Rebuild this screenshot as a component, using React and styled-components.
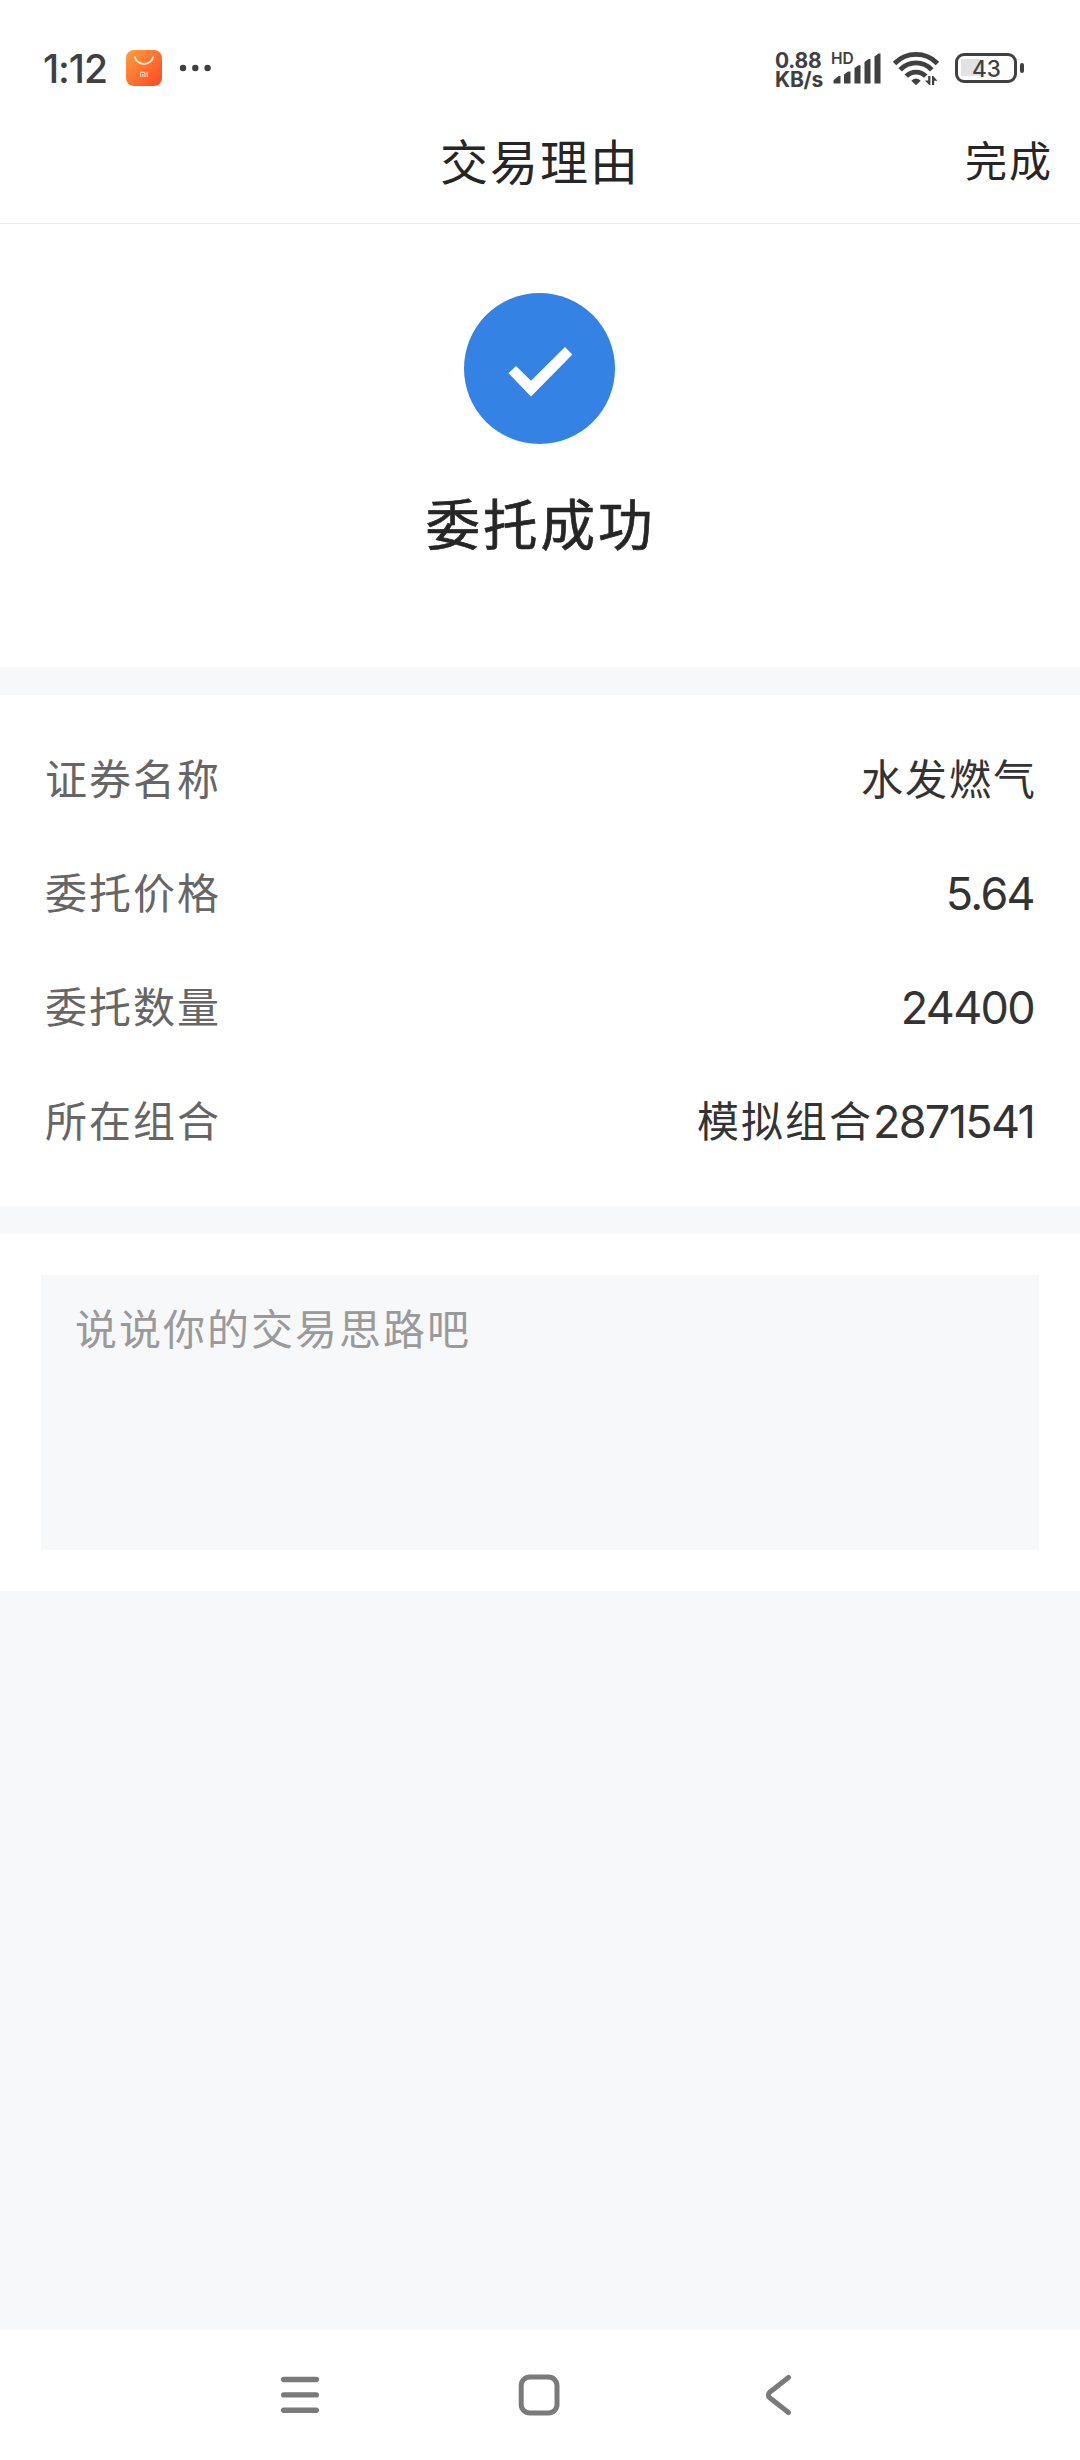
import React, { useState } from "react";
import styled, { createGlobalStyle } from "styled-components";

const orderInfo = [
    { label: "证券名称", text: "水发燃气" },
    { label: "委托价格", number: "5.64" },
    { label: "委托数量", number: "24400" },
    { label: "所在组合", text: "模拟组合", number: "2871541" },
];

const StatusBar = () => {
    return (
        <St.StatusBar>
            <St.StatusLeft>
                <St.Time>1:12</St.Time>
                <svg width="36" height="36" viewBox="0 0 36 36">
                    <defs>
                        <linearGradient id="store" x1="0" y1="0" x2="1" y2="1">
                            <stop offset="0" stopColor="#ff9f3c" />
                            <stop offset="1" stopColor="#ff4726" />
                        </linearGradient>
                    </defs>
                    <rect width="36" height="36" rx="8" fill="url(#store)" />
                    <path d="M8.7 6.5a9.4 8.6 0 0 0 18.6 0" fill="none" stroke="#fff1dc" strokeWidth="1.7" />
                    <path d="M14.6 27v-4.6h3.2q1.2 0 1.2 1.2V27M16.8 24v3M21.2 22v5" fill="none" stroke="#ffd9c0" strokeWidth="1.1" />
                </svg>
                <svg width="32" height="8" viewBox="0 0 32 8" fill="#404040">
                    <circle cx="4" cy="4" r="3.2" />
                    <circle cx="16.3" cy="4" r="3.2" />
                    <circle cx="28.6" cy="4" r="3.2" />
                </svg>
            </St.StatusLeft>
            <St.StatusRight>
                <St.Speed>
                    <span>0.88</span>
                    <span>KB/s</span>
                </St.Speed>
                <St.Signal>
                    <St.Hd>HD</St.Hd>
                    <svg width="50" height="34" viewBox="0 0 50 34" fill="#404040">
                        <path d="M2.5 32.5V29.3L7.5 25H9.5V32.5ZM13 32.5V23.5L17 20.5H19.5V32.5ZM23.5 32.5V17L27.5 14.3H29.5V32.5ZM33.5 32.5V11L37.5 8H39.5V32.5ZM43.5 32.5V5.5L47.5 2.5H49.5V32.5Z" />
                    </svg>
                </St.Signal>
                <St.Wifi width="46" height="36" viewBox="0 0 46 36">
                    <g fill="none" stroke="#404040" strokeWidth="4.8">
                        <path d="M1.5 13.5A30 30 0 0 1 44.5 13.5" />
                        <path d="M7.2 19.8A21.5 21.5 0 0 1 38.8 19.8" />
                        <path d="M13.3 26.2A13.5 13.5 0 0 1 32.7 26.2" />
                    </g>
                    <path d="M23 35.2L18.3 30.7Q23 26.5 27.7 30.7Z" fill="#404040" />
                    <path d="M32 30.5H35.2V26H37.4V35H36.2ZM39 26H40.2L44.4 30.8H41.2V35H39Z" fill="#404040" />
                </St.Wifi>
                <St.Battery>
                    <St.BatteryBody>43</St.BatteryBody>
                    <St.BatteryTip />
                </St.Battery>
            </St.StatusRight>
        </St.StatusBar>
    );
};

const NavigationBar = () => {
    return (
        <St.NavigationBar>
            <svg width="40" height="42" viewBox="0 0 40 42" fill="none" stroke="#7a7a7a" strokeWidth="5.4" strokeLinecap="round">
                <path d="M3.7 5.5H36.3M3.7 20.9H36.3M3.7 36.2H36.3" />
            </svg>
            <svg width="42" height="42" viewBox="0 0 42 42" fill="none" stroke="#7a7a7a" strokeWidth="5">
                <rect x="3.2" y="3" width="35.8" height="36" rx="8.5" />
            </svg>
            <svg width="42" height="42" viewBox="0 0 42 42" fill="none" stroke="#7a7a7a" strokeWidth="5" strokeLinecap="round">
                <path d="M30.5 3.5L12 18Q8.5 21 12 24L30.5 38.5" />
            </svg>
        </St.NavigationBar>
    );
};

const App = () => {

    const [reason, setReason] = useState("");

    return (
        <>
            <GlobalStyle />
            <St.Page>
                <StatusBar />
                <St.Header>
                    <St.Title>交易理由</St.Title>
                    <St.DoneButton>完成</St.DoneButton>
                </St.Header>
                <St.Result>
                    <svg width="151" height="151" viewBox="0 0 151 151">
                        <circle cx="75.5" cy="75.5" r="75.5" fill="#3482e4" />
                        <path d="M44.5 80.3L52 72.9L67 87.8L101 54L108.4 61.4L67 103.4Z" fill="#fff" />
                    </svg>
                    <St.ResultText>委托成功</St.ResultText>
                </St.Result>
                <St.InfoList>
                    {orderInfo.map((info) => (
                        <St.InfoRow key={info.label}>
                            <St.Label>{info.label}</St.Label>
                            <St.Value>
                                {info.text}
                                {info.number && <St.Number>{info.number}</St.Number>}
                            </St.Value>
                        </St.InfoRow>
                    ))}
                </St.InfoList>
                <St.ReasonSection>
                    <St.ReasonInput
                        placeholder="说说你的交易思路吧"
                        value={reason}
                        onChange={(e) => setReason(e.target.value)}
                    />
                </St.ReasonSection>
                <NavigationBar />
            </St.Page>
        </>
    );
};

export default App;

const GlobalStyle = createGlobalStyle`
    * {
        box-sizing: border-box;
    }

    body {
        margin: 0;
        background: #f7f8fa;
        font-family: "Noto Sans CJK SC", sans-serif;
    }

    svg {
        display: block;
        flex-shrink: 0;
    }
`;

const St = {
    Page: styled.div`
        display: flex;
        flex-direction: column;
        width: 1080px;
        height: 2460px;
        background: #f7f8fa;
    `,

    StatusBar: styled.div`
        display: flex;
        justify-content: space-between;
        align-items: center;
        height: 104px;
        padding: 32px 56px 0 43px;
        background: #ffffff;
        color: #404040;
        font-family: Inter, sans-serif;
    `,

    StatusLeft: styled.div`
        display: flex;
        align-items: center;
        gap: 17px;
    `,

    Time: styled.div`
        width: 66px;
        padding-top: 1px;
        font-size: 39px;
        font-weight: 500;
        line-height: 40px;
        letter-spacing: -1.1px;
        white-space: nowrap;
    `,

    StatusRight: styled.div`
        display: flex;
        align-items: center;
    `,

    Speed: styled.div`
        display: flex;
        flex-direction: column;
        width: 56px;
        padding-top: 3px;
        font-size: 21px;
        font-weight: 700;
        line-height: 19px;
        letter-spacing: -0.2px;
        white-space: nowrap;
    `,

    Signal: styled.div`
        position: relative;
        margin-right: 12px;
    `,

    Hd: styled.span`
        position: absolute;
        top: 0;
        left: 0;
        font-size: 15.5px;
        font-weight: 600;
        line-height: 15px;
    `,

    Wifi: styled.svg`
        margin-right: 16px;
    `,

    Battery: styled.div`
        display: flex;
        align-items: center;
        gap: 3px;
    `,

    BatteryBody: styled.div`
        width: 62px;
        height: 30px;
        padding-left: 1px;
        border: 3.5px solid #404040;
        border-radius: 9px;
        background: linear-gradient(#e2e2e2, #e2e2e2) 3px 3px / 20px 17px no-repeat;
        font-size: 22.5px;
        font-weight: 500;
        line-height: 25px;
        text-align: center;
    `,

    BatteryTip: styled.div`
        width: 4px;
        height: 10px;
        border-radius: 2px;
        background: #404040;
    `,

    Header: styled.div`
        display: grid;
        grid-template-columns: 1fr auto 1fr;
        align-items: center;
        height: 120px;
        padding: 0 27px 10px;
        border-bottom: 1px solid #ebebeb;
        background: #ffffff;
        color: #262626;
    `,

    Title: styled.div`
        grid-column: 2;
        font-size: 48px;
        line-height: 70px;
        letter-spacing: 2px;
    `,

    DoneButton: styled.button`
        justify-self: end;
        padding: 0;
        border: none;
        background: none;
        color: #262626;
        font-family: inherit;
        font-size: 42px;
        line-height: 70px;
        letter-spacing: 2px;
    `,

    Result: styled.div`
        display: flex;
        flex-direction: column;
        align-items: center;
        height: 443px;
        padding: 69px 1px 0 0;
        background: #ffffff;
    `,

    ResultText: styled.div`
        margin-top: 38px;
        padding-left: 2px;
        color: #262626;
        font-size: 54.5px;
        -webkit-text-stroke: 0.7px #262626;
        line-height: 80px;
        letter-spacing: 3px;
    `,

    InfoList: styled.div`
        height: 511px;
        margin-top: 28px;
        padding: 25px 44px 0 45px;
        background: #ffffff;
    `,

    InfoRow: styled.div`
        display: flex;
        justify-content: space-between;
        align-items: center;
        height: 114px;
        font-size: 42px;
        line-height: 60px;
    `,

    Label: styled.div`
        color: #666666;
        letter-spacing: 2px;
    `,

    Value: styled.div`
        margin-right: -1px;
        color: #333333;
        letter-spacing: 2px;
    `,

    Number: styled.span`
        position: relative;
        top: 1px;
        margin-right: 3px;
        font-family: Inter, sans-serif;
        font-size: 45px;
        line-height: 1;
        letter-spacing: -1.7px;
    `,

    ReasonSection: styled.div`
        height: 357px;
        margin-top: 28px;
        padding: 41px;
        background: #ffffff;
    `,

    ReasonInput: styled.textarea`
        display: block;
        width: 100%;
        height: 275px;
        padding: 22px 34px;
        border: none;
        outline: none;
        resize: none;
        background: #f7f8fa;
        color: #333333;
        font-family: inherit;
        font-size: 42px;
        line-height: 60px;
        letter-spacing: 2px;

        &::placeholder {
            color: #9a9a9a;
            opacity: 1;
        }
    `,

    NavigationBar: styled.div`
        display: flex;
        justify-content: center;
        gap: 198px;
        height: 130px;
        margin-top: auto;
        padding-top: 44px;
        background: #ffffff;
    `,
}
